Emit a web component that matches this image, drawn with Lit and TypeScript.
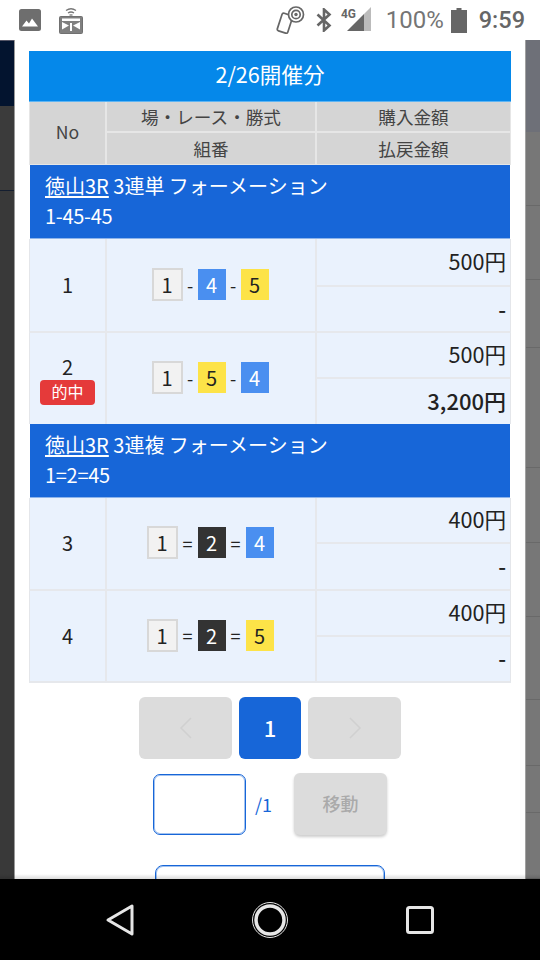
import { LitElement, html, css } from "lit";
import { customElement } from "lit/decorators.js";

type Ball = [string, string];
interface Row { no: string; hit?: boolean; sep: string; balls: Ball[]; amount: string; pay: string; size: string; }
interface Group { venue: string; title: string; combo: string; rows: Row[]; }

const groups: Group[] = [
  { venue: "徳山3R", title: " 3連単 フォーメーション", combo: "1-45-45", rows: [
    { no: "1", size: "tall", sep: "-", balls: [["1", "w"], ["4", "b"], ["5", "y"]], amount: "500円", pay: "-" },
    { no: "2", size: "short", hit: true, sep: "-", balls: [["1", "w"], ["5", "y"], ["4", "b"]], amount: "500円", pay: "3,200円" },
  ]},
  { venue: "徳山3R", title: " 3連複 フォーメーション", combo: "1=2=45", rows: [
    { no: "3", size: "mid", sep: "=", balls: [["1", "w"], ["2", "k"], ["4", "b"]], amount: "400円", pay: "-" },
    { no: "4", size: "mid", sep: "=", balls: [["1", "w"], ["2", "k"], ["5", "y"]], amount: "400円", pay: "-" },
  ]},
];

const rightBands = [92, 74, 74, 68, 120, 75, 74, 83, 66, 47, 66];

@customElement("app-root")
export class AppRoot extends LitElement {
  static styles = css`
    :host { display: block; width: 540px; height: 960px; overflow: hidden; background: #fff;
      font-family: "Noto Sans CJK JP", "Noto Sans", sans-serif; color: #222; }
    .status { height: 40px; display: flex; align-items: center; padding: 0 15px 0 19px; background: #fff; }
    .status svg { display: block; }
    .st-left { display: flex; gap: 18px; align-items: center; }
    .st-right { margin-left: auto; display: flex; align-items: center; }
    .ml-bt { margin-left: 11px; }
    .ml-sig { margin-left: 9px; }
    .ml-bat { margin-left: 7px; }
    .pct { font: 24px "Roboto", sans-serif; margin-left: 15px; color: #757575; }
    .time { font: 500 23.500px "Roboto", sans-serif; margin-left: 12px; color: #666; }
    .stage { height: 839px; display: grid; grid-template-columns: 15px 510px 15px; overflow: hidden; position: relative; }
    .fade { position: absolute; left: 0; right: 0; bottom: 0; height: 5px; background: linear-gradient(rgba(0,0,0,0), rgba(0,0,0,.14)); }
    .left { background: #393939; border-right: 1px solid #999; box-sizing: border-box; display: flex; flex-direction: column; }
    .navy { height: 66px; background: #03142f; border-top: 1px solid #556; box-sizing: border-box; }
    .dark1 { height: 85px; background: #3b3b3b; border-bottom: 1px solid #141e30; box-sizing: border-box; }
    .right { background: #777; border-left: 1px solid #a0a0a0; box-sizing: border-box; display: flex; flex-direction: column; }
    .band { box-sizing: border-box; border-bottom: 1px solid #696969; }
    .band.first { background: #6e7078; border-bottom: 0; }
    .modal { background: #fff; padding: 11px 14px 0; min-height: 0; overflow: hidden; }
    .head { height: 51px; padding-bottom: 5px; box-sizing: border-box; background: #0588ea; color: #fff; font-size: 21.600px; display: flex; align-items: center; justify-content: center; border-bottom: 1px solid #5fb5f3; }
    .thead { display: grid; grid-template-columns: 77px 210px 193px; grid-template-rows: 31px 31px; background: #d5d5d5; border: 1px solid #e6e6e6; border-top: 0; color: #444; }
    .thead > div { display: flex; align-items: center; justify-content: center; font-size: 17.600px; box-sizing: border-box; }
    .thead .no { grid-row: span 2; border-right: 2px solid #e6e6e6; padding-bottom: 3px; }
    .thead .mid { border-right: 2px solid #e6e6e6; }
    .thead .h1 { border-bottom: 2px solid #e6e6e6; }
    .group { background: #1766d8; color: #fff; font-size: 20px; line-height: 30px; padding: 6px 15px 6px; height: 61px; margin: 0 1px; border-bottom: 1px solid #8eb4ea; }
    .group a { color: inherit; text-decoration: underline; text-underline-offset: 2px; }
    .combo { letter-spacing: -0.300px; }
    .row { display: grid; grid-template-columns: 77px 210px 193px; background: #eaf2fd; border-left: 1px solid #e4e6ea; border-right: 1px solid #e4e6ea; box-sizing: border-box; border-bottom: 2px solid #e6e8ec; }
    .row.tall { height: 94px; }
    .row.short { height: 91px; border-bottom: 0; }
    .row.mid { height: 92.500px; }
    .cno { display: flex; flex-direction: column; align-items: center; justify-content: center; font-size: 20px; line-height: 27px; border-right: 2px solid #e6e8ec; padding-bottom: 1px; }
    .short .cno { padding-bottom: 0; }
    .hit { background: #e53a3a; color: #fff; font-size: 16px; line-height: 23px; height: 25px; width: 55px; border-radius: 4px; text-align: center; }
    .cballs { display: flex; align-items: center; justify-content: center; font-size: 18px; gap: 4px; border-right: 2px solid #e6e8ec; padding: 0 2px 1px 0; }
    .short .cballs { padding-bottom: 2px; }
    .sep { text-align: center; width: 7px; }
    .sep.eq { width: 12px; }
    .ball { width: 28px; height: 31px; display: flex; align-items: center; justify-content: center; font-size: 20px; box-sizing: border-box; }
    .ball.w { width: 31px; height: 33px; background: #f2f2f2; border: 2px solid #d8d8d8; color: #222; }
    .ball.b { background: #4a8ff0; color: #fff; }
    .ball.y { background: #fde348; color: #222; }
    .ball.k { background: #333; color: #fff; }
    .cam { display: grid; grid-template-rows: 48px 1fr; }
    .short .cam { grid-template-rows: 46px 1fr; }
    .mid .cam { grid-template-rows: 46px 1fr; }
    .cam > div { display: flex; align-items: center; justify-content: flex-end; padding: 0 4px 3px 0; font-size: 21.600px; }
    .short .cam > div:first-child { padding-bottom: 4px; }
    .cam > div:first-child { border-bottom: 2px solid #e6e8ec; }
    .cam .pay { font-size: 22px; font-weight: 500; }
    .pager { display: flex; justify-content: center; gap: 7px; margin-top: 14px; }
    .pg { width: 93px; height: 62px; border-radius: 6px; background: #dcdcdc; display: flex; align-items: center; justify-content: center; }
    .pg.cur { width: 62px; background: #1766d8; color: #fff; font-size: 22px; font-weight: 500; padding-bottom: 2px; box-sizing: border-box; }
    .jump { display: flex; align-items: center; justify-content: center; margin-top: 14px; }
    .input { width: 93px; height: 61px; border: 1px solid #1766d8; box-shadow: inset 0 0 0 1px rgba(23,102,216,.4); border-radius: 7px; box-sizing: border-box; background: #fff; }
    .total { color: #1766d8; font-size: 18px; margin-left: 9px; width: 39px; }
    .go { width: 93px; height: 62px; padding-bottom: 3px; border-radius: 6px; background: #dcdcdc; color: #aaa; font-size: 18px; font-weight: 500; display: flex; align-items: center; justify-content: center; box-sizing: border-box; box-shadow: 0 2px 3px rgba(0,0,0,.2); }
    .close { width: 230px; height: 40px; border: 1px solid #1766d8; box-shadow: inset 0 0 0 1px rgba(23,102,216,.4); border-radius: 8px; box-sizing: border-box; margin: 30px auto 0; background: #fff; }
    .nav { height: 81px; background: #000; display: flex; align-items: center; justify-content: center; }
    .navin { display: grid; grid-template-columns: repeat(3, 150px); justify-items: center; align-items: center; }
  `;

  private renderRow(r: Row) {
    const sepClass = r.sep === "=" ? "sep eq" : "sep";
    return html`<div class="row ${r.size}">
      <div class="cno"><span>${r.no}</span>${r.hit ? html`<span class="hit">的中</span>` : ""}</div>
      <div class="cballs">${r.balls.map((b, i) => html`${i ? html`<span class="${sepClass}">${r.sep}</span>` : ""}<span class="ball ${b[1]}">${b[0]}</span>`)}</div>
      <div class="cam"><div>${r.amount}</div><div class="pay">${r.pay}</div></div>
    </div>`;
  }

  render() {
    return html`
      <div class="status">
        <div class="st-left">
          <svg width="22" height="22" viewBox="0 0 22 22"><rect width="22" height="22" rx="2.500" fill="#6e6e6e"/><path d="M3 17.500l4.500-6 2.500 3 3-5 6 8z" fill="#fff"/></svg>
          <svg width="24" height="27" viewBox="0 0 24 27" fill="none" stroke="#777"><path d="M7 3.500q5-3.500 10 0M9 6q3-2 6 0" stroke-width="1.300"/><path d="M10.500 8h3" stroke-width="1.300"/><rect x="0.500" y="9.500" width="23" height="17" rx="1" fill="#808080" stroke="#707070"/><path d="M3 11.500h18v2.500H3zM3 15l7 3.500-7 4zM21 15l-7 3.500 7 4zM11 16h2v8h-2z" fill="#fff" stroke="none"/></svg>
        </div>
        <div class="st-right">
          <svg width="29" height="28" viewBox="0 0 29 28" fill="none" stroke="#666" stroke-width="1.700"><rect x="3.500" y="8" width="11" height="18.500" rx="1.800" transform="rotate(18 9 17)"/><circle cx="20" cy="8.500" r="7.500" fill="#fff"/><circle cx="20" cy="8.500" r="4.200"/><circle cx="20" cy="8.500" r="1.700" fill="#666" stroke="none"/></svg>
          <svg class="ml-bt" width="16" height="24" viewBox="0 0 16 24" fill="none" stroke="#666" stroke-width="2.600"><path d="M1.500 6.500l12 11-5.500 5V1.500l5.500 5-12 11"/></svg>
          <svg class="ml-sig" width="30" height="26" viewBox="0 0 30 26"><path d="M6 24L23 7v17z" fill="#666"/><path d="M23 7l7-7v24h-7z" fill="#bbb"/><text x="0" y="11" font-size="13" font-weight="700" font-family="Roboto" textLength="15" lengthAdjust="spacingAndGlyphs" fill="#666">4G</text></svg>
          <span class="pct">100%</span>
          <svg class="ml-bat" width="16" height="25" viewBox="0 0 16 25"><path d="M5.500 0h5v2H16v23H0V2h5.500z" fill="#666"/></svg>
          <span class="time">9:59</span>
        </div>
      </div>
      <div class="stage">
        <div class="left"><div class="navy"></div><div class="dark1"></div></div>
        <div class="modal">
          <div class="head">2/26開催分</div>
          <div class="thead">
            <div class="no">No</div><div class="mid h1">場・レース・勝式</div><div class="h1">購入金額</div>
            <div class="mid">組番</div><div>払戻金額</div>
          </div>
          ${groups.map(g => html`
            <div class="group"><a>${g.venue}</a>${g.title}<br><span class="combo">${g.combo}</span></div>
            ${g.rows.map(r => this.renderRow(r))}
          `)}
          <div class="pager">
            <div class="pg"><svg width="14" height="22" viewBox="0 0 14 22" fill="none" stroke="#d0d0d0" stroke-width="1.500"><path d="M12 1L2 11l10 10"/></svg></div>
            <div class="pg cur">1</div>
            <div class="pg"><svg width="14" height="22" viewBox="0 0 14 22" fill="none" stroke="#d0d0d0" stroke-width="1.500"><path d="M2 1l10 10L2 21"/></svg></div>
          </div>
          <div class="jump">
            <div class="input"></div><span class="total">/1</span><div class="go">移動</div>
          </div>
          <div class="close"></div>
        </div>
        <div class="right">${rightBands.map((h, i) => html`<div class="band ${i === 0 ? "first" : ""}" style="height:${h}px"></div>`)}</div>
        <div class="fade"></div>
      </div>
      <div class="nav"><div class="navin">
        <svg width="30" height="34" viewBox="0 0 30 34" fill="none" stroke="#e6e6e6" stroke-width="3" stroke-linejoin="round"><path d="M3 17L27 3v28z"/></svg>
        <svg width="38" height="38" viewBox="0 0 38 38" fill="none" stroke="#e6e6e6"><circle cx="19" cy="19" r="17.500" stroke-width="1"/><circle cx="19" cy="19" r="14" stroke-width="3.500"/></svg>
        <svg width="28" height="28" viewBox="0 0 28 28" fill="none" stroke="#e6e6e6" stroke-width="3"><rect x="1.500" y="1.500" width="25" height="25" rx="2"/></svg>
      </div></div>
    `;
  }
}
